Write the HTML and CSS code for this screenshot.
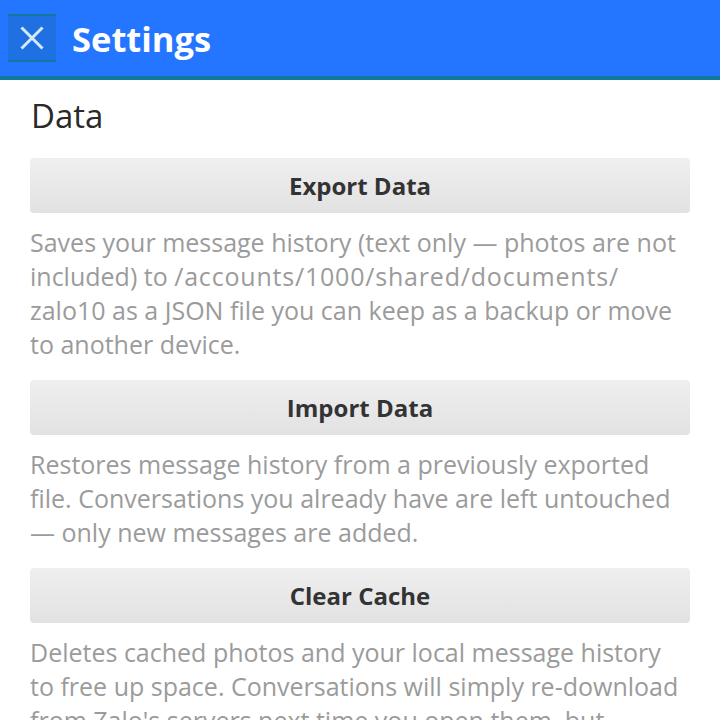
FILE: index.html
```html
<!DOCTYPE html>
<html>
<head>
<meta charset="utf-8">
<link rel="stylesheet" href="styles.css">
</head>
<body>
<header class="titlebar">
  <button class="close-btn" aria-label="Close">
    <svg width="24" height="24" viewBox="0 0 24 24"><path d="M1.5 1.5 L22.5 22.5 M22.5 1.5 L1.5 22.5" stroke="#d6eaf2" stroke-width="3" fill="none"/></svg>
  </button>
  <h1 class="title">Settings</h1>
</header>
<main class="content">
  <h2 class="section-title">Data</h2>
  <div class="item">
    <button class="action">Export Data</button>
    <p class="desc">Saves your message history (text only — photos are not included) to <span class="path">/accounts/1000/shared/documents/</span><wbr>zalo10 as a JSON file you can keep as a backup or move to another device.</p>
  </div>
  <div class="item">
    <button class="action">Import Data</button>
    <p class="desc">Restores message history from a previously exported file. Conversations you already have are left untouched — only new messages are added.</p>
  </div>
  <div class="item">
    <button class="action">Clear Cache</button>
    <p class="desc">Deletes cached photos and your local message history to free up space. Conversations will simply re-download from Zalo's servers next time you open them, but</p>
  </div>
</main>
</body>
</html>
```
FILE: styles.css
```css
html, body {
  margin: 0;
  padding: 0;
  background: #ffffff;
  font-family: "Open Sans", sans-serif;
  overflow: hidden;
  height: 720px;
}
.titlebar {
  display: flex;
  align-items: center;
  height: 76px;
  background: #2475ff;
  border-bottom: 4px solid #0f7a9c;
  padding-left: 8px;
}
.close-btn {
  width: 48px;
  height: 48px;
  box-sizing: border-box;
  margin: 0;
  padding: 0;
  border: none;
  border-top: 2px solid #127b9d;
  border-bottom: 2px solid #127b9d;
  background: #1f70e3;
  display: flex;
  align-items: center;
  justify-content: center;
}
.title {
  margin: 2px 0 0 16px;
  color: #ffffff;
  font-size: 34.5px;
  font-weight: 700;
  line-height: 40px;
}
.content {
  padding: 0 30px;
}
.section-title {
  margin: 16px 0 0 1px;
  font-size: 33px;
  font-weight: 400;
  color: #2a2a2a;
  line-height: 40px;
}
.item {
  margin-top: 22px;
}
.item + .item {
  margin-top: 19px;
}
.action {
  display: block;
  width: 100%;
  height: 55px;
  border: none;
  border-radius: 4px;
  background: linear-gradient(#efefef, #e2e2e2);
  font-family: "Open Sans", sans-serif;
  font-size: 24px;
  font-weight: 700;
  color: #333333;
  padding: 0;
}
.desc {
  margin: 12px 0 0 0;
  font-size: 25px;
  line-height: 34px;
  color: #9b9b9b;
}
.path {
  letter-spacing: 0.8px;
}
```
